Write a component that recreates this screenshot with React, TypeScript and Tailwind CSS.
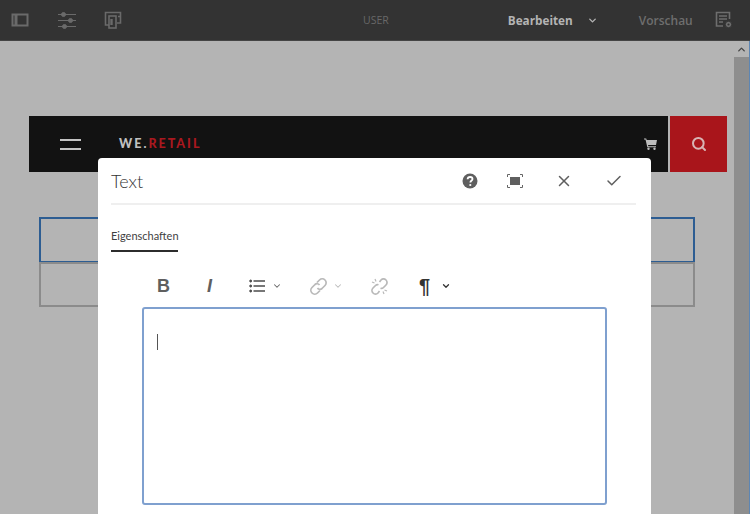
import { Check, ChevronDown, ChevronUp, Search, X } from "lucide-react";

function PanelIcon() {
  return (
    <svg width="18" height="15" viewBox="0 0 18 15" fill="none" stroke="#6a6a6a" strokeWidth="2">
      <rect x="1.500" y="1.500" width="15" height="11" />
      <path d="M5 2v10" strokeWidth="3" />
    </svg>
  );
}

function SlidersIcon() {
  return (
    <svg width="20" height="18" viewBox="0 0 20 18" fill="#6a6a6a" stroke="#6a6a6a" strokeWidth="1">
      <path d="M1 3.500h18M1 9.500h18M1 15.500h18" />
      <circle cx="6.500" cy="3.500" r="2" />
      <circle cx="13.500" cy="9.500" r="2" />
      <circle cx="7.500" cy="15.500" r="2" />
    </svg>
  );
}

function DeviceIcon() {
  return (
    <svg width="18" height="19" viewBox="0 0 18 19" fill="none" stroke="#6a6a6a" strokeWidth="1.600">
      <path d="M5 14H1.500V1.500h15V12H13" />
      <rect x="5" y="5" width="7" height="12" fill="#333" />
      <path d="M7.500 8v6" strokeWidth="2.400" />
      <path d="M14 5.500h2" />
    </svg>
  );
}

function PageInfoIcon() {
  return (
    <svg width="18" height="18" viewBox="0 0 18 18" fill="none" stroke="#6e6e6e" strokeWidth="1.600">
      <path d="M8 15H1.500V1.500h13V8" />
      <path d="M4 5h8M4 8h8M4 11h4" />
      <circle cx="13.500" cy="13.500" r="3.200" fill="#6e6e6e" stroke="#333" strokeWidth="1" />
      <circle cx="13.500" cy="13.500" r="1.100" fill="#333" stroke="none" />
    </svg>
  );
}

function CartIcon() {
  return (
    <svg width="13" height="12" viewBox="0 0 13 12" fill="#bdbdbd">
      <path d="M0 .5h2.200l.5 1.500H13l-1 5H4l.3 1.200H12v1H3.300L1.500 1.500H0z" />
      <circle cx="4.500" cy="10.700" r="1.200" />
      <circle cx="10.500" cy="10.700" r="1.200" />
    </svg>
  );
}

function HelpIcon() {
  return (
    <svg width="16" height="16" viewBox="0 0 16 16">
      <circle cx="8" cy="8" r="7.500" fill="#5f5f5f" />
      <path d="M5.600 6.200C5.700 4.800 6.700 4 8.100 4c1.400 0 2.400.8 2.400 2 0 1.800-2.100 1.800-2.100 3.400" fill="none" stroke="#fff" strokeWidth="1.800" />
      <circle cx="8.300" cy="12" r="1.100" fill="#fff" />
    </svg>
  );
}

function FullscreenIcon() {
  return (
    <svg width="16" height="14" viewBox="0 0 16 14" fill="none" stroke="#666" strokeWidth="1">
      <path d="M.5 3V.5H3M13 .5h2.500V3M15.500 11v2.500H13M3 13.500H.5V11" />
      <rect x="3" y="3" width="10" height="8" fill="#5f5f5f" stroke="none" />
    </svg>
  );
}

function ListIcon() {
  return (
    <svg width="16" height="14" viewBox="0 0 16 14" fill="#4b4b4b" stroke="#4b4b4b" strokeWidth="1.600">
      <circle cx="1.700" cy="2" r="1" strokeWidth="1" />
      <circle cx="1.700" cy="7" r="1" strokeWidth="1" />
      <circle cx="1.700" cy="12" r="1" strokeWidth="1" />
      <path d="M4.500 2H16M4.500 7H16M4.500 12H16" />
    </svg>
  );
}

function LinkIcon() {
  return (
    <svg width="17" height="17" viewBox="0 0 17 17" fill="none" stroke="#b9b9b9" strokeWidth="1.700">
      <path d="M7 4.500 9.500 2a3 3 0 0 1 5.500 5.500l-3 3a3 3 0 0 1-4.500-.5" />
      <path d="M10 12.500 7.500 15A3 3 0 0 1 2 9.500l3-3a3 3 0 0 1 4.500.5" />
    </svg>
  );
}

function UnlinkIcon() {
  return (
    <svg width="17" height="17" viewBox="0 0 17 17" fill="none" stroke="#b9b9b9" strokeWidth="1.700">
      <path d="M8.500 4 10 2a3 3 0 0 1 5 5l-2.500 2.500a3 3 0 0 1-3 .8" />
      <path d="M8.500 13 7 15a3 3 0 0 1-5-5l2.500-2.500a3 3 0 0 1 3-.8" />
      <path d="M1 4l2.500 1M4 1l1 2.500M16 13l-2.500-1M13 16l-1-2.500" strokeWidth="1.200" />
    </svg>
  );
}

function App() {
  return (
    <div className="relative flex h-[514px] w-[750px] flex-col overflow-hidden bg-[#b4b4b4] font-['Open_Sans',sans-serif]">
      <header className="flex h-[41px] shrink-0 items-center border-b border-[#444] bg-[#333333] pl-[11px]">
        <PanelIcon />
        <div className="ml-[28px]"><SlidersIcon /></div>
        <div className="ml-[27px]"><DeviceIcon /></div>
        <span className="ml-[241px] pt-[1px] text-[10.500px] text-[#686868]">USER</span>
        <span className="ml-[119px] pt-[1px] text-[11.750px] font-bold text-[#b4b4b4]">Bearbeiten</span>
        <ChevronDown className="ml-[14px] text-[#b4b4b4]" size={11} strokeWidth={3} />
        <span className="ml-[41px] pt-[1px] text-[12px] font-semibold text-[#6e6e6e]">Vorschau</span>
        <div className="ml-[22px]"><PageInfoIcon /></div>
      </header>

      <div className="flex min-h-0 flex-1">
        <main className="flex-1 pl-[29px] pt-[75px]">
          <nav className="flex h-[56px] w-[698px] gap-[2px]">
            <div className="flex flex-1 items-center bg-[#121212] pl-[31px] pr-[11px]">
              <div className="flex w-[21px] flex-col gap-[7px]">
                <div className="h-[2px] bg-[#c4c4c4]" />
                <div className="h-[2px] bg-[#c4c4c4]" />
              </div>
              <div className="ml-[38px] font-['Lato',sans-serif] text-[12.500px] font-black tracking-[2px] text-[#c0c0c0]">
                WE.<span className="text-[#a9181f]">RETAIL</span>
              </div>
              <div className="ml-auto"><CartIcon /></div>
            </div>
            <div className="flex w-[57px] items-center justify-center bg-[#a9151b]">
              <Search className="text-[#d8b4b4]" size={16} strokeWidth={3} />
            </div>
          </nav>
          <div className="ml-[10px] mt-[45px] w-[656px]">
            <div className="h-[46px] border-2 border-[#2d5d92]" />
            <div className="-mt-[1px] h-[45px] border-2 border-[#8b8b8b]" />
          </div>
        </main>
        <div className="flex w-[16px] shrink-0 flex-col items-center border-r border-[#5d86b3] bg-[#8e8e8e]">
          <div className="flex h-[16px] w-full items-center justify-center bg-[#b4b4b4]">
            <ChevronUp className="text-[#444]" size={11} strokeWidth={3} />
          </div>
        </div>
      </div>

      <section className="absolute bottom-0 left-[98px] top-[158px] w-[553px] rounded-t-[4px] bg-white pl-[13px] pr-[15px] font-['Lato',sans-serif]">
        <div className="flex h-[47px] items-center border-b-2 border-[#efefef]">
          <h2 className="pt-[2px] text-[18px] font-light text-[#333333]">Text</h2>
          <div className="ml-auto flex items-center">
            <HelpIcon />
            <div className="ml-[29px]"><FullscreenIcon /></div>
            <X className="ml-[32px] text-[#5f5f5f]" size={18} strokeWidth={2} />
            <Check className="ml-[32px] text-[#5f5f5f]" size={18} strokeWidth={2} />
            <div className="w-[13px]" />
          </div>
        </div>
        <div className="mt-[21px] w-[67px] border-b-2 border-[#2c2c2c] pb-[4px] text-[11px] leading-[20px] whitespace-nowrap text-[#3f3f3f]">
          Eigenschaften
        </div>
        <div className="ml-[31px] mt-[21px] flex h-[26px] w-[465px] items-center">
          <span className="ml-[15px] w-[14px] font-['Liberation_Sans',sans-serif] text-[18px] font-bold text-[#5f5f5f]">B</span>
          <span className="ml-[36px] w-[8px] font-['Liberation_Sans',sans-serif] text-[18px] font-bold italic text-[#5f5f5f]">I</span>
          <div className="ml-[34px]"><ListIcon /></div>
          <ChevronDown className="ml-[7px] text-[#666]" size={10} strokeWidth={2.500} />
          <div className="ml-[28px]"><LinkIcon /></div>
          <ChevronDown className="ml-[6px] text-[#bbbbbb]" size={10} strokeWidth={2.500} />
          <div className="ml-[28px]"><UnlinkIcon /></div>
          <span className="ml-[31px] font-['Liberation_Sans',sans-serif] text-[20px] font-bold text-[#333]">¶</span>
          <ChevronDown className="ml-[11px] text-[#333]" size={10} strokeWidth={3} />
        </div>
        <div className="ml-[31px] mt-[8px] h-[198px] w-[465px] rounded-[3px] border-2 border-[#7fa0cf] pl-[13px] pt-[25px]">
          <div className="h-[16px] w-[1px] bg-[#555]" />
        </div>
      </section>
    </div>
  );
}

export default App;
